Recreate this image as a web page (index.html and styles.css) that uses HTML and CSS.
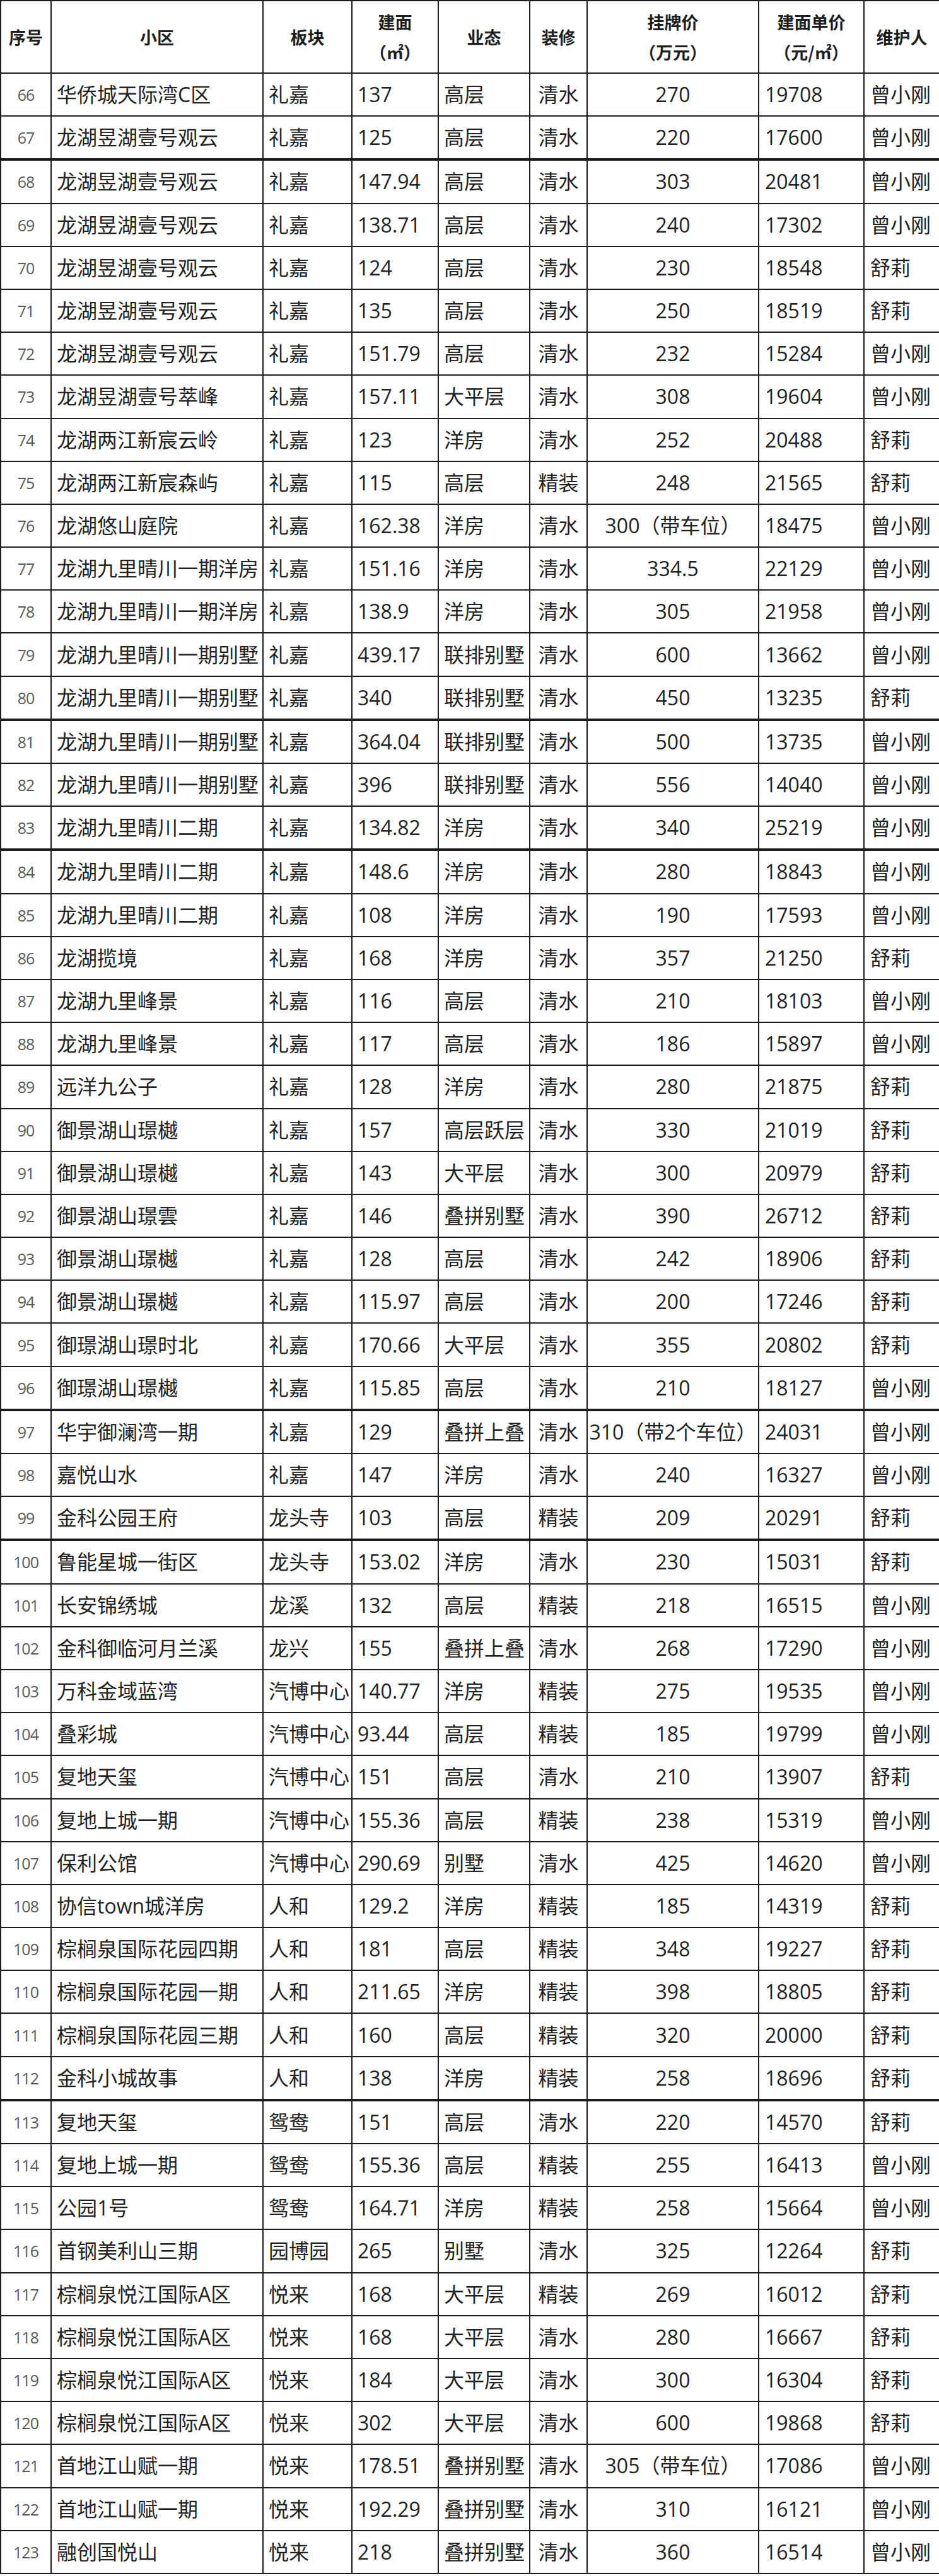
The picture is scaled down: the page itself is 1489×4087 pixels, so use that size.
FILE: index.html
```html
<!DOCTYPE html>
<html lang="zh-CN">
<head>
<meta charset="utf-8">
<title>房源表</title>
<link rel="stylesheet" href="styles.css">
</head>
<body>
<table class="sheet">
<colgroup>
<col class="c-no"><col class="c-name"><col class="c-area"><col class="c-size"><col class="c-type"><col class="c-deco"><col class="c-price"><col class="c-unit"><col class="c-agent">
</colgroup>
<thead>
<tr>
<th>序号</th><th>小区</th><th>板块</th><th>建面<br>（㎡）</th><th>业态</th><th>装修</th><th>挂牌价<br>（万元）</th><th>建面单价<br>（元/㎡）</th><th>维护人</th>
</tr>
</thead>
<tbody>
<tr><td>66</td><td>华侨城天际湾C区</td><td>礼嘉</td><td>137</td><td>高层</td><td>清水</td><td>270</td><td>19708</td><td>曾小刚</td></tr>
<tr class="sep"><td>67</td><td>龙湖昱湖壹号观云</td><td>礼嘉</td><td>125</td><td>高层</td><td>清水</td><td>220</td><td>17600</td><td>曾小刚</td></tr>
<tr><td>68</td><td>龙湖昱湖壹号观云</td><td>礼嘉</td><td>147.94</td><td>高层</td><td>清水</td><td>303</td><td>20481</td><td>曾小刚</td></tr>
<tr><td>69</td><td>龙湖昱湖壹号观云</td><td>礼嘉</td><td>138.71</td><td>高层</td><td>清水</td><td>240</td><td>17302</td><td>曾小刚</td></tr>
<tr><td>70</td><td>龙湖昱湖壹号观云</td><td>礼嘉</td><td>124</td><td>高层</td><td>清水</td><td>230</td><td>18548</td><td>舒莉</td></tr>
<tr><td>71</td><td>龙湖昱湖壹号观云</td><td>礼嘉</td><td>135</td><td>高层</td><td>清水</td><td>250</td><td>18519</td><td>舒莉</td></tr>
<tr><td>72</td><td>龙湖昱湖壹号观云</td><td>礼嘉</td><td>151.79</td><td>高层</td><td>清水</td><td>232</td><td>15284</td><td>曾小刚</td></tr>
<tr><td>73</td><td>龙湖昱湖壹号萃峰</td><td>礼嘉</td><td>157.11</td><td>大平层</td><td>清水</td><td>308</td><td>19604</td><td>曾小刚</td></tr>
<tr><td>74</td><td>龙湖两江新宸云岭</td><td>礼嘉</td><td>123</td><td>洋房</td><td>清水</td><td>252</td><td>20488</td><td>舒莉</td></tr>
<tr><td>75</td><td>龙湖两江新宸森屿</td><td>礼嘉</td><td>115</td><td>高层</td><td>精装</td><td>248</td><td>21565</td><td>舒莉</td></tr>
<tr><td>76</td><td>龙湖悠山庭院</td><td>礼嘉</td><td>162.38</td><td>洋房</td><td>清水</td><td>300（带车位）</td><td>18475</td><td>曾小刚</td></tr>
<tr><td>77</td><td>龙湖九里晴川一期洋房</td><td>礼嘉</td><td>151.16</td><td>洋房</td><td>清水</td><td>334.5</td><td>22129</td><td>曾小刚</td></tr>
<tr><td>78</td><td>龙湖九里晴川一期洋房</td><td>礼嘉</td><td>138.9</td><td>洋房</td><td>清水</td><td>305</td><td>21958</td><td>曾小刚</td></tr>
<tr><td>79</td><td>龙湖九里晴川一期别墅</td><td>礼嘉</td><td>439.17</td><td>联排别墅</td><td>清水</td><td>600</td><td>13662</td><td>曾小刚</td></tr>
<tr class="sep"><td>80</td><td>龙湖九里晴川一期别墅</td><td>礼嘉</td><td>340</td><td>联排别墅</td><td>清水</td><td>450</td><td>13235</td><td>舒莉</td></tr>
<tr><td>81</td><td>龙湖九里晴川一期别墅</td><td>礼嘉</td><td>364.04</td><td>联排别墅</td><td>清水</td><td>500</td><td>13735</td><td>曾小刚</td></tr>
<tr><td>82</td><td>龙湖九里晴川一期别墅</td><td>礼嘉</td><td>396</td><td>联排别墅</td><td>清水</td><td>556</td><td>14040</td><td>曾小刚</td></tr>
<tr class="sep"><td>83</td><td>龙湖九里晴川二期</td><td>礼嘉</td><td>134.82</td><td>洋房</td><td>清水</td><td>340</td><td>25219</td><td>曾小刚</td></tr>
<tr><td>84</td><td>龙湖九里晴川二期</td><td>礼嘉</td><td>148.6</td><td>洋房</td><td>清水</td><td>280</td><td>18843</td><td>曾小刚</td></tr>
<tr><td>85</td><td>龙湖九里晴川二期</td><td>礼嘉</td><td>108</td><td>洋房</td><td>清水</td><td>190</td><td>17593</td><td>曾小刚</td></tr>
<tr><td>86</td><td>龙湖揽境</td><td>礼嘉</td><td>168</td><td>洋房</td><td>清水</td><td>357</td><td>21250</td><td>舒莉</td></tr>
<tr><td>87</td><td>龙湖九里峰景</td><td>礼嘉</td><td>116</td><td>高层</td><td>清水</td><td>210</td><td>18103</td><td>曾小刚</td></tr>
<tr><td>88</td><td>龙湖九里峰景</td><td>礼嘉</td><td>117</td><td>高层</td><td>清水</td><td>186</td><td>15897</td><td>曾小刚</td></tr>
<tr><td>89</td><td>远洋九公子</td><td>礼嘉</td><td>128</td><td>洋房</td><td>清水</td><td>280</td><td>21875</td><td>舒莉</td></tr>
<tr><td>90</td><td>御景湖山璟樾</td><td>礼嘉</td><td>157</td><td>高层跃层</td><td>清水</td><td>330</td><td>21019</td><td>舒莉</td></tr>
<tr><td>91</td><td>御景湖山璟樾</td><td>礼嘉</td><td>143</td><td>大平层</td><td>清水</td><td>300</td><td>20979</td><td>舒莉</td></tr>
<tr><td>92</td><td>御景湖山璟雲</td><td>礼嘉</td><td>146</td><td>叠拼别墅</td><td>清水</td><td>390</td><td>26712</td><td>舒莉</td></tr>
<tr><td>93</td><td>御景湖山璟樾</td><td>礼嘉</td><td>128</td><td>高层</td><td>清水</td><td>242</td><td>18906</td><td>舒莉</td></tr>
<tr><td>94</td><td>御景湖山璟樾</td><td>礼嘉</td><td>115.97</td><td>高层</td><td>清水</td><td>200</td><td>17246</td><td>舒莉</td></tr>
<tr><td>95</td><td>御璟湖山璟时北</td><td>礼嘉</td><td>170.66</td><td>大平层</td><td>清水</td><td>355</td><td>20802</td><td>舒莉</td></tr>
<tr class="sep"><td>96</td><td>御璟湖山璟樾</td><td>礼嘉</td><td>115.85</td><td>高层</td><td>清水</td><td>210</td><td>18127</td><td>曾小刚</td></tr>
<tr><td>97</td><td>华宇御澜湾一期</td><td>礼嘉</td><td>129</td><td>叠拼上叠</td><td>清水</td><td>310（带2个车位）</td><td>24031</td><td>曾小刚</td></tr>
<tr><td>98</td><td>嘉悦山水</td><td>礼嘉</td><td>147</td><td>洋房</td><td>清水</td><td>240</td><td>16327</td><td>曾小刚</td></tr>
<tr class="sep"><td>99</td><td>金科公园王府</td><td>龙头寺</td><td>103</td><td>高层</td><td>精装</td><td>209</td><td>20291</td><td>舒莉</td></tr>
<tr><td>100</td><td>鲁能星城一街区</td><td>龙头寺</td><td>153.02</td><td>洋房</td><td>清水</td><td>230</td><td>15031</td><td>舒莉</td></tr>
<tr><td>101</td><td>长安锦绣城</td><td>龙溪</td><td>132</td><td>高层</td><td>精装</td><td>218</td><td>16515</td><td>曾小刚</td></tr>
<tr><td>102</td><td>金科御临河月兰溪</td><td>龙兴</td><td>155</td><td>叠拼上叠</td><td>清水</td><td>268</td><td>17290</td><td>曾小刚</td></tr>
<tr><td>103</td><td>万科金域蓝湾</td><td>汽博中心</td><td>140.77</td><td>洋房</td><td>精装</td><td>275</td><td>19535</td><td>曾小刚</td></tr>
<tr><td>104</td><td>叠彩城</td><td>汽博中心</td><td>93.44</td><td>高层</td><td>精装</td><td>185</td><td>19799</td><td>曾小刚</td></tr>
<tr><td>105</td><td>复地天玺</td><td>汽博中心</td><td>151</td><td>高层</td><td>清水</td><td>210</td><td>13907</td><td>舒莉</td></tr>
<tr><td>106</td><td>复地上城一期</td><td>汽博中心</td><td>155.36</td><td>高层</td><td>精装</td><td>238</td><td>15319</td><td>曾小刚</td></tr>
<tr><td>107</td><td>保利公馆</td><td>汽博中心</td><td>290.69</td><td>别墅</td><td>清水</td><td>425</td><td>14620</td><td>曾小刚</td></tr>
<tr><td>108</td><td>协信town城洋房</td><td>人和</td><td>129.2</td><td>洋房</td><td>精装</td><td>185</td><td>14319</td><td>舒莉</td></tr>
<tr><td>109</td><td>棕榈泉国际花园四期</td><td>人和</td><td>181</td><td>高层</td><td>精装</td><td>348</td><td>19227</td><td>舒莉</td></tr>
<tr><td>110</td><td>棕榈泉国际花园一期</td><td>人和</td><td>211.65</td><td>洋房</td><td>精装</td><td>398</td><td>18805</td><td>舒莉</td></tr>
<tr><td>111</td><td>棕榈泉国际花园三期</td><td>人和</td><td>160</td><td>高层</td><td>精装</td><td>320</td><td>20000</td><td>舒莉</td></tr>
<tr class="sep"><td>112</td><td>金科小城故事</td><td>人和</td><td>138</td><td>洋房</td><td>精装</td><td>258</td><td>18696</td><td>舒莉</td></tr>
<tr><td>113</td><td>复地天玺</td><td>鸳鸯</td><td>151</td><td>高层</td><td>清水</td><td>220</td><td>14570</td><td>舒莉</td></tr>
<tr><td>114</td><td>复地上城一期</td><td>鸳鸯</td><td>155.36</td><td>高层</td><td>精装</td><td>255</td><td>16413</td><td>曾小刚</td></tr>
<tr><td>115</td><td>公园1号</td><td>鸳鸯</td><td>164.71</td><td>洋房</td><td>精装</td><td>258</td><td>15664</td><td>曾小刚</td></tr>
<tr><td>116</td><td>首钢美利山三期</td><td>园博园</td><td>265</td><td>别墅</td><td>清水</td><td>325</td><td>12264</td><td>舒莉</td></tr>
<tr><td>117</td><td>棕榈泉悦江国际A区</td><td>悦来</td><td>168</td><td>大平层</td><td>精装</td><td>269</td><td>16012</td><td>舒莉</td></tr>
<tr><td>118</td><td>棕榈泉悦江国际A区</td><td>悦来</td><td>168</td><td>大平层</td><td>清水</td><td>280</td><td>16667</td><td>舒莉</td></tr>
<tr><td>119</td><td>棕榈泉悦江国际A区</td><td>悦来</td><td>184</td><td>大平层</td><td>清水</td><td>300</td><td>16304</td><td>舒莉</td></tr>
<tr><td>120</td><td>棕榈泉悦江国际A区</td><td>悦来</td><td>302</td><td>大平层</td><td>清水</td><td>600</td><td>19868</td><td>舒莉</td></tr>
<tr><td>121</td><td>首地江山赋一期</td><td>悦来</td><td>178.51</td><td>叠拼别墅</td><td>清水</td><td>305（带车位）</td><td>17086</td><td>曾小刚</td></tr>
<tr><td>122</td><td>首地江山赋一期</td><td>悦来</td><td>192.29</td><td>叠拼别墅</td><td>清水</td><td>310</td><td>16121</td><td>曾小刚</td></tr>
<tr><td>123</td><td>融创国悦山</td><td>悦来</td><td>218</td><td>叠拼别墅</td><td>清水</td><td>360</td><td>16514</td><td>曾小刚</td></tr>
</tbody>
</table>
</body>
</html>
```
FILE: styles.css
```css
html, body {
  margin: 0;
  padding: 0;
  background: #ffffff;
}

.sheet {
  width: 1489px;
  table-layout: fixed;
  border-collapse: collapse;
  font-family: "Open Sans", "Noto Sans CJK SC", sans-serif;
  color: #222222;
}

.c-no { width: 80px; }
.c-name { width: 336px; }
.c-area { width: 141px; }
.c-size { width: 137px; }
.c-type { width: 145px; }
.c-deco { width: 91px; }
.c-price { width: 272px; }
.c-unit { width: 167px; }
.c-agent { width: 120px; }

.sheet th,
.sheet td {
  border: 2px solid #1c1c1c;
  padding: 0;
  white-space: nowrap;
  overflow: visible;
}

.sheet th {
  height: 113px;
  font-family: "Noto Sans CJK SC", sans-serif;
  font-size: 27px;
  font-weight: 700;
  line-height: 48px;
  text-align: center;
  vertical-align: middle;
  color: #1e1e1e;
}

.sheet td {
  height: 66.2px;
  font-size: 32px;
  line-height: 40px;
  vertical-align: middle;
  text-align: left;
  padding-left: 8px;
}

.sheet td:nth-child(1) {
  font-size: 25px;
  color: #5a5a5a;
  text-align: center;
  padding-left: 0;
  letter-spacing: -1px;
}

.sheet td:nth-child(6),
.sheet td:nth-child(7) {
  text-align: center;
  padding-left: 0;
}

.sheet td:nth-child(8) { padding-left: 9px; }
.sheet td:nth-child(9) { padding-left: 9px; }

.sheet tr.sep td {
  border-bottom-width: 4px;
}
```
